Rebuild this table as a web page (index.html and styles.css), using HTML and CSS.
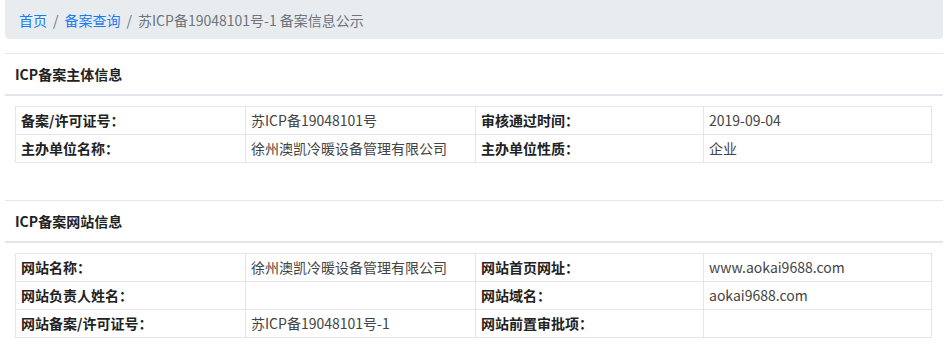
FILE: index.html
```html
<!DOCTYPE html>
<html lang="zh-CN">
<head>
<meta charset="utf-8">
<title>备案信息公示</title>
<link rel="stylesheet" href="styles.css">
</head>
<body>
<div class="page">
  <nav class="crumbs">
    <a class="crumb-link" href="#">首页</a>
    <span class="crumb-sep">/</span>
    <a class="crumb-link" href="#">备案查询</a>
    <span class="crumb-sep">/</span>
    <span class="crumb-current">苏ICP备19048101号-1 备案信息公示</span>
  </nav>

  <section class="panel">
    <h2 class="panel-title">ICP备案主体信息</h2>
    <table class="info">
      <tr>
        <th>备案/许可证号：</th><td>苏ICP备19048101号</td>
        <th>审核通过时间：</th><td>2019-09-04</td>
      </tr>
      <tr>
        <th>主办单位名称：</th><td>徐州澳凯冷暖设备管理有限公司</td>
        <th>主办单位性质：</th><td>企业</td>
      </tr>
    </table>
  </section>

  <section class="panel panel-second">
    <h2 class="panel-title">ICP备案网站信息</h2>
    <table class="info">
      <tr>
        <th>网站名称：</th><td>徐州澳凯冷暖设备管理有限公司</td>
        <th>网站首页网址：</th><td>www.aokai9688.com</td>
      </tr>
      <tr>
        <th>网站负责人姓名：</th><td></td>
        <th>网站域名：</th><td>aokai9688.com</td>
      </tr>
      <tr>
        <th>网站备案/许可证号：</th><td>苏ICP备19048101号-1</td>
        <th>网站前置审批项：</th><td></td>
      </tr>
    </table>
  </section>
</div>
</body>
</html>
```
FILE: styles.css
```css
html, body {
  margin: 0;
  padding: 0;
  background: #fff;
}
body {
  font-family: "Noto Sans CJK SC", "Noto Sans", sans-serif;
  font-size: 14px;
  color: #333;
}
.page {
  width: 938px;
  padding: 0 5px;
}
.crumbs {
  display: flex;
  align-items: center;
  height: 39px;
  padding: 0 14px;
  background: #e9ecef;
  border-radius: 0 0 4px 4px;
  font-size: 14px;
  box-sizing: border-box;
}
.crumb-link {
  color: #1a7cf2;
  text-decoration: none;
}
.crumb-sep {
  color: #6c757d;
  padding: 0 6px;
}
.crumb-current {
  color: #6c757d;
}
.panel {
  margin-top: 14px;
  border-top: 1px solid #e6e6e6;
}
.panel-second {
  margin-top: 37px;
}
.panel-title {
  margin: 0;
  height: 40px;
  line-height: 40px;
  padding-left: 10px;
  font-size: 14px;
  font-weight: bold;
  color: #222;
  border-bottom: 2px solid #e1e6ec;
}
.info {
  margin: 10px 11px 0 10px;
  width: 917px;
  border-collapse: collapse;
  table-layout: fixed;
}
.info th,
.info td {
  border: 1px solid #e3e6e9;
  height: 19px;
  line-height: 19px;
  padding: 4px 5px;
  text-align: left;
  vertical-align: middle;
  font-size: 14px;
}
.info th {
  font-weight: bold;
  color: #222;
}
.info td {
  color: #444;
}
.info th:nth-child(1) { width: 219px; }
.info td:nth-child(2) { width: 219px; }
.info th:nth-child(3) { width: 217px; }
```
